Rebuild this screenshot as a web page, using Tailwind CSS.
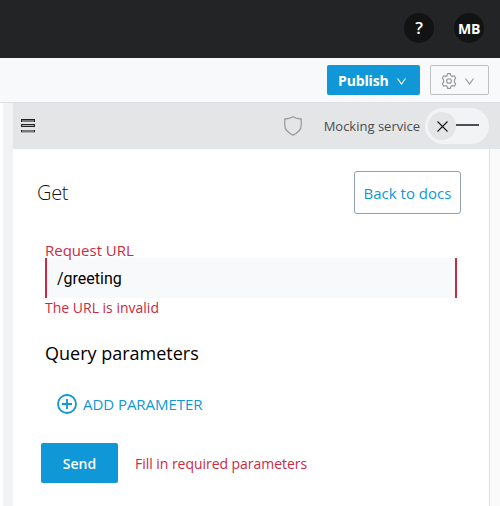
<!DOCTYPE html>
<html lang="en">
<head>
<meta charset="utf-8">
<title>API console</title>
<script src="https://cdn.jsdelivr.net/npm/@tailwindcss/browser@4"></script>
</head>
<body class="w-[500px] h-[506px] overflow-hidden bg-white font-['Open_Sans','Noto_Sans',sans-serif] whitespace-nowrap flex flex-col">
<header class="h-[58px] shrink-0 bg-[#232426] flex items-center justify-end gap-5 pr-4 pb-[2px] text-white font-bold">
  <button class="size-[30px] rounded-full bg-[#121414] text-[17px] font-semibold leading-[30px]">?</button>
  <button class="size-[30px] rounded-full bg-[#121414] text-[14px] leading-[30px] pt-[1px] tracking-[-0.2px]">MB</button>
</header>
<div class="h-[45px] shrink-0 bg-[#f8f9fb] border-b border-[#dddfe3] flex items-start justify-end gap-[10px] pt-[7px] pr-[11px]">
  <button class="w-[93px] h-[30px] rounded-[2px] bg-[#0f97d8] text-white font-bold text-[14px] flex items-center pl-[11px] gap-[8px]">
    <span class="tracking-[-0.15px] pt-[1px]">Publish</span>
    <svg class="w-[9px] h-[7px] mt-[2px]" viewBox="0 0 9 7" fill="none" stroke="currentColor" stroke-width="1.1"><path d="M.5.5 4.500 6 8.500.5"/></svg>
  </button>
  <button class="w-[59px] h-[30px] rounded-[2px] border border-[#bfc0c2] text-[#929496] flex items-center pl-[10px] gap-[8px]">
    <svg class="size-4 mt-[1px]" viewBox="0 0 16 16" fill="none" stroke="currentColor" stroke-width="1.1" stroke-linejoin="round"><path d="M6.600.6h2.800l.5 2.100 1.300.7 2.100-.6 1.400 2.400-1.300 1.600v2.400l1.300 1.600-1.400 2.400-2.100-.6-1.300.7-.5 2.100H6.600l-.5-2.100-1.300-.7-2.100.6-1.400-2.400 1.300-1.600V6.800L1.300 5.200l1.400-2.400 2.100.6 1.300-.7Z"/><circle cx="8" cy="8" r="2.300"/></svg>
    <svg class="w-[9px] h-[7px] mt-[2px]" viewBox="0 0 9 7" fill="none" stroke="currentColor" stroke-width="1.1"><path d="M.5.5 4.500 6 8.500.5"/></svg>
  </button>
</div>
<div class="flex flex-1 min-h-0">
  <aside class="w-[13px] shrink-0 border-l-[3px] border-white bg-[#f1f2f4]"></aside>
  <main class="flex-1 flex flex-col">
    <div class="h-[46px] shrink-0 bg-[#e4e5e7] flex items-center pl-2 pr-[11px]">
      <svg class="w-[14px] h-[14px]" viewBox="0 0 14 14" shape-rendering="crispEdges"><path fill="#202222" d="M0 0h14v3H0zM0 5h14v3H0zM0 11h14v3H0z"/><path fill="#777978" d="M1 1h12v2H1zM1 11h12v2H1z"/><path fill="#b0b2b2" d="M1 6h12v1H1zM0 13h14v1H0z"/></svg>
      <svg class="w-[18px] h-5 ml-auto" viewBox="0 0 18 20" fill="none" stroke="#9a9c9f" stroke-width="1.300" stroke-linejoin="round"><path d="M9 .8C6.600 2.300 3.500 3 .8 3v6.800C.8 14.500 4.600 17 9 19.200c4.400-2.200 8.200-4.700 8.200-9.400V3C14.500 3 11.400 2.300 9 .8Z"/></svg>
      <span class="ml-[22px] pt-[2px] text-[13px] text-[#4a4c4f]">Mocking service</span>
      <div class="ml-[5px] w-16 h-9 rounded-full bg-[#f2f3f5] flex items-center pl-[3px]">
        <span class="size-7 rounded-full bg-[#e4e5e7] flex items-center justify-center"><svg class="size-[11px]" viewBox="0 0 11 11" stroke="#151515" stroke-width="1.1"><path d="m.5.5 10 10m0-10-10 10"/></svg></span>
        <span class="w-[23px] h-[2px] bg-[#4d4f52] -mt-[2px]"></span>
      </div>
    </div>
    <div class="flex flex-1">
      <section class="w-[477px] border-r border-[#e0e1e3] pt-[22px] pl-6">
        <div class="flex justify-between pr-7 h-[43px]">
          <h1 class="text-[20px] leading-[43px] font-light text-[#151515] tracking-[-0.3px]">Get</h1>
          <button class="w-[107px] h-[43px] rounded-[3px] border border-[#91a1ac] text-[#0f97d8] text-[15px] pt-[2px]">Back to docs</button>
        </div>
        <div class="ml-2 mt-[27px]">
          <label class="block h-[17px] text-[15px] leading-[19px] text-[#ca2a43]">Request URL</label>
          <div class="w-[412px] h-10 border-x-2 border-[#ca2a43] bg-[#f8f9fb] pl-[10px] font-[Roboto,sans-serif] text-[16px] leading-[42px] text-black">/greeting</div>
          <p class="text-[14px] leading-5 text-[#ca2a43]">The URL is invalid</p>
          <h2 class="mt-[21px] text-[18px] leading-[28px] text-black">Query parameters</h2>
          <button class="ml-3 mt-[25px] h-6 flex items-center gap-[6px] text-[#0f97d8] text-[15px]">
            <svg class="size-5" viewBox="0 0 20 20" fill="none" stroke="currentColor" stroke-width="1.8"><circle cx="10" cy="10" r="9"/><path d="M5 10h10M10 5v10"/></svg>
            <span class="tracking-[-0.05px]">ADD PARAMETER</span>
          </button>
        </div>
        <div class="ml-1 mt-[27px] flex items-center gap-[17px]">
          <button class="w-[77px] h-10 rounded-[2px] bg-[#0f97d8] text-white text-[14px] font-semibold">Send</button>
          <span class="text-[14px] text-[#ca2a43] tracking-[-0.04px]">Fill in required parameters</span>
        </div>
      </section>
      <div class="flex-1 bg-[#fafafa]"></div>
    </div>
  </main>
</div>
</body>
</html>
